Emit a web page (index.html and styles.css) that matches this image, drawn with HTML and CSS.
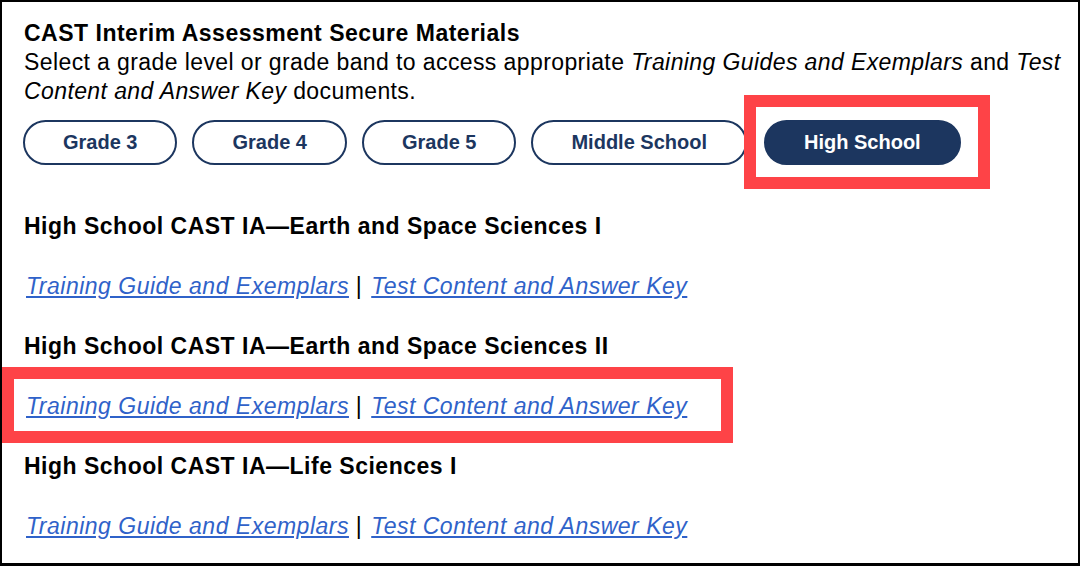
FILE: index.html
```html
<!DOCTYPE html>
<html lang="en">
<head>
<meta charset="utf-8">
<title>CAST Interim Assessment Secure Materials</title>
<link rel="stylesheet" href="styles.css">
</head>
<body>
<div class="frame">
  <h1 class="title">CAST Interim Assessment Secure Materials</h1>
  <p class="intro">Select a grade level or grade band to access appropriate <em>Training Guides and Exemplars</em> and <em>Test Content and Answer Key</em> documents.</p>
  <div class="tabs">
    <button class="tab">Grade 3</button>
    <button class="tab">Grade 4</button>
    <button class="tab">Grade 5</button>
    <button class="tab">Middle School</button>
    <button class="tab tab-active">High School</button>
  </div>
  <div class="sections">
    <h2 class="sec-title">High School CAST IA—Earth and Space Sciences I</h2>
    <p class="sec-links"><a href="#">Training Guide and Exemplars</a> | <a href="#">Test Content and Answer Key</a></p>
    <h2 class="sec-title">High School CAST IA—Earth and Space Sciences II</h2>
    <p class="sec-links"><a href="#">Training Guide and Exemplars</a> | <a href="#">Test Content and Answer Key</a></p>
    <h2 class="sec-title">High School CAST IA—Life Sciences I</h2>
    <p class="sec-links"><a href="#">Training Guide and Exemplars</a> | <a href="#">Test Content and Answer Key</a></p>
  </div>
  <div class="callout callout-tab"></div>
  <div class="callout callout-links"></div>
</div>
</body>
</html>
```

FILE: styles.css
```css
html, body {
  margin: 0;
  padding: 0;
  background: #ffffff;
}
.frame {
  position: relative;
  box-sizing: border-box;
  width: 1080px;
  height: 566px;
  border: 2px solid #000000;
  border-bottom-width: 3px;
  padding: 17px 0 0 22px;
  font-family: "Liberation Sans", Arial, sans-serif;
  color: #000000;
  overflow: hidden;
}
.title {
  margin: 0;
  font-size: 23px;
  line-height: 29px;
  letter-spacing: 0.5px;
  font-weight: bold;
}
.intro {
  margin: 0;
  font-size: 23px;
  line-height: 29px;
  letter-spacing: 0.4px;
}
.tabs {
  display: flex;
  gap: 15px;
  margin-top: 14px;
  margin-left: -1px;
}
.tab {
  box-sizing: border-box;
  height: 45px;
  padding: 0 38px;
  border: 2px solid #1c365f;
  border-radius: 23px;
  background: #ffffff;
  color: #1c365f;
  font-family: "Liberation Sans", Arial, sans-serif;
  font-size: 20px;
  font-weight: bold;
  cursor: pointer;
}
.tab-active {
  margin-left: 2px;
  background: #1c365f;
  color: #ffffff;
}
.sections {
  margin-top: 46px;
}
.sec-title {
  margin: 0 0 30px 0;
  font-size: 23px;
  line-height: 30px;
  letter-spacing: 0.5px;
  font-weight: bold;
}
.sec-links {
  margin: 0 0 30px 0;
  font-size: 23px;
  line-height: 30px;
  letter-spacing: 0.5px;
}
.sec-links a {
  color: #2f62c9;
  font-style: italic;
  text-decoration: underline;
  margin-left: 2px;
}
.callout {
  position: absolute;
  box-sizing: border-box;
  border: 12px solid #fe4347;
}
.callout-tab {
  left: 742px;
  top: 93px;
  width: 246px;
  height: 94px;
}
.callout-links {
  left: 0;
  top: 365px;
  width: 731px;
  height: 76px;
}
```
